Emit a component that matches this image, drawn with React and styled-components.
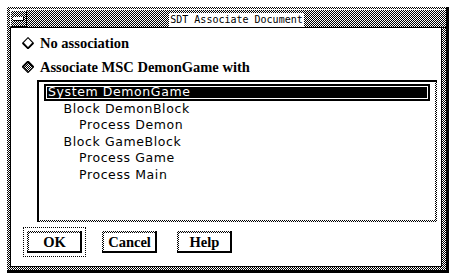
import React from 'react';
import styled, { createGlobalStyle, css } from 'styled-components';

const checker = css`
  background-color: #fff;
  background-image: repeating-conic-gradient(#000 0 25%, #fff 0 50%);
  background-size: 2px 2px;
`;

const Global = createGlobalStyle`
  html, body { margin: 0; padding: 0; background: #fff; }
  body { width: 456px; height: 280px; overflow: hidden; }
  * { box-sizing: border-box; }
`;

const Window = styled.div`
  ${checker}
  margin: 7px 0 0 7px;
  width: 442px;
  padding: 2px 0 3px 3px;
  border-right: 3px solid #000;
  border-bottom: 3px solid #000;
  display: flex;
  flex-direction: column;
`;

const TitleBar = styled.div`
  height: 19px;
  border-top: 1px solid #fff;
  border-bottom: 1px solid #000;
  display: flex;
`;

const MenuButton = styled.div`
  ${checker}
  width: 17px;
  height: 17px;
  border-top: 1px solid #fff;
  border-left: 1px solid #fff;
  border-bottom: 1px solid #000;
  border-right: 1px solid #000;
  display: flex;
  align-items: center;
  justify-content: center;
`;

const MenuBar = styled.div`
  width: 11px;
  height: 4px;
  background: #fff;
  border-bottom: 1px solid #000;
  border-right: 1px solid #000;
`;

const TitleArea = styled.div`
  flex: 1;
  display: flex;
  justify-content: center;
  align-items: flex-end;
`;

const TitleText = styled.div`
  background: #fff;
  color: #000;
  font-family: "DejaVu Sans Mono", "Liberation Mono", monospace;
  font-size: 10px;
  line-height: 14px;
  height: 14px;
  padding: 0 1px;
  white-space: pre;
`;

const Body = styled.div`
  margin-right: 4px;
  height: 239px;
  background: #fff;
  border: 1px solid #000;
  border-top: none;
  padding-top: 3px;
  display: flex;
  flex-direction: column;
`;

const RadioRow = styled.div`
  height: 24px;
  display: flex;
  align-items: center;
  gap: 6px;
  padding-left: 11px;
  font-family: "Liberation Serif", "Times New Roman", serif;
  font-weight: bold;
  font-size: 14.5px;
  color: #000;
`;

const ListFrame = styled.div`
  ${checker}
  margin: 1px 4px 0 26px;
  height: 142px;
  border-top: 2px solid #000;
  border-left: 2px solid #000;
  padding: 0 2px 2px 0;
  display: flex;
`;

const ListInner = styled.div`
  flex: 1;
  background: #fff;
  padding: 2px 5px 0 5px;
`;

const Item = styled.div`
  height: 16.5px;
  line-height: 16.5px;
  font-family: "DejaVu Sans", sans-serif;
  font-size: 12.5px;
  letter-spacing: 0.6px;
  white-space: pre;
  padding-left: ${(p) => 4 + p.$level * 15.5}px;
  color: ${(p) => (p.$selected ? '#fff' : '#000')};
  background: ${(p) => (p.$selected ? '#000' : 'transparent')};
  ${(p) =>
    p.$selected &&
    css`
      outline: 1px solid #fff;
      outline-offset: -3px;
    `}
`;

const ButtonRow = styled.div`
  display: flex;
  gap: 12px;
  padding-left: 12px;
  margin-top: 5px;
`;

const Slot = styled.div`
  padding: 3px;
  border: 1px ${(p) => (p.$default ? 'dotted #000' : 'solid transparent')};
`;

const Button = styled.button`
  ${checker}
  display: block;
  width: 55px;
  height: 22px;
  margin: 0;
  padding: 2px 0 0 2px;
  border: none;
  border-right: 2px solid #000;
  border-bottom: 2px solid #000;
  font-family: "Liberation Serif", "Times New Roman", serif;
  font-weight: bold;
  font-size: 14.5px;
  color: #000;
  cursor: pointer;
`;

const ButtonFace = styled.span`
  display: flex;
  align-items: center;
  justify-content: center;
  width: 100%;
  height: 100%;
  background: #fff;
`;

const Diamond = ({ filled }) => (
  <svg width="12" height="12" viewBox="0 0 12 12">
    <defs>
      <pattern id="dith" width="2" height="2" patternUnits="userSpaceOnUse">
        <rect width="2" height="2" fill="#fff" />
        <rect width="1" height="1" fill="#000" />
        <rect x="1" y="1" width="1" height="1" fill="#000" />
      </pattern>
    </defs>
    {filled ? (
      <>
        <polygon points="6,0.5 11.5,6 6,11.5 0.5,6" fill="url(#dith)" stroke="#000" strokeWidth="1.2" />
        <polyline points="0.5,6 6,0.5 11.5,6" fill="none" stroke="#000" strokeWidth="1.8" />
      </>
    ) : (
      <>
        <polygon points="6,0.7 11.3,6 6,11.3 0.7,6" fill="#fff" stroke="#000" strokeWidth="1.1" />
        <polyline points="0.7,6 6,11.3 11.3,6" fill="none" stroke="#000" strokeWidth="1.8" />
      </>
    )}
  </svg>
);

const items = [
  { label: 'System DemonGame', level: 0, selected: true },
  { label: 'Block DemonBlock', level: 1 },
  { label: 'Process Demon', level: 2 },
  { label: 'Block GameBlock', level: 1 },
  { label: 'Process Game', level: 2 },
  { label: 'Process Main', level: 2 },
];

export default function App() {
  return (
    <>
      <Global />
      <Window>
        <TitleBar>
          <MenuButton>
            <MenuBar />
          </MenuButton>
          <TitleArea>
            <TitleText>SDT Associate Document</TitleText>
          </TitleArea>
        </TitleBar>
        <Body>
          <RadioRow>
            <Diamond />
            <span>No association</span>
          </RadioRow>
          <RadioRow>
            <Diamond filled />
            <span>Associate MSC DemonGame with</span>
          </RadioRow>
          <ListFrame>
            <ListInner>
              {items.map((it) => (
                <Item key={it.label} $level={it.level} $selected={it.selected}>
                  {it.label}
                </Item>
              ))}
            </ListInner>
          </ListFrame>
          <ButtonRow>
            <Slot $default>
              <Button><ButtonFace>OK</ButtonFace></Button>
            </Slot>
            <Slot>
              <Button><ButtonFace>Cancel</ButtonFace></Button>
            </Slot>
            <Slot>
              <Button><ButtonFace>Help</ButtonFace></Button>
            </Slot>
          </ButtonRow>
        </Body>
      </Window>
    </>
  );
}
